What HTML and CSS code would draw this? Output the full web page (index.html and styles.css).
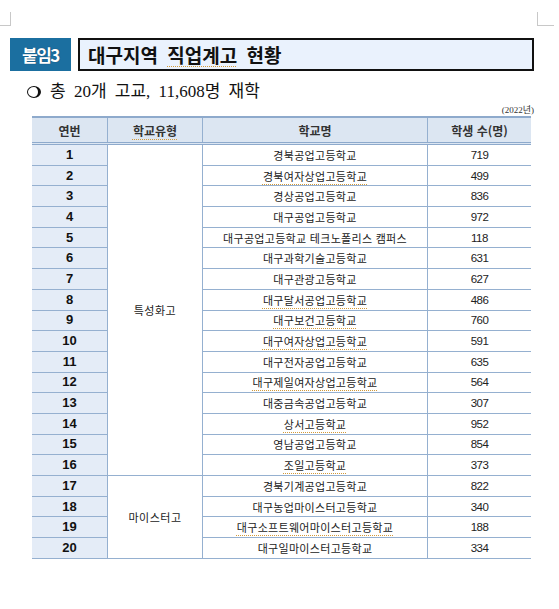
FILE: index.html
```html
<!DOCTYPE html>
<html lang="ko">
<head>
<meta charset="utf-8">
<link rel="stylesheet" href="styles.css">
</head>
<body>
<div class="page">
  <span class="corner corner-left"></span>
  <span class="corner corner-right"></span>
  <div class="title-row">
    <div class="badge">붙임3</div>
    <div class="title"><span class="title-text">대구지역 <span class="sp">직업계고</span> 현황</span></div>
  </div>
  <p class="bullet"><span class="circle"></span><span>총 20개 고교, 11,608명 재학</span></p>
  <div class="year">(2022년)</div>
  <table class="tbl">
    <thead>
      <tr><th class="c1">연번</th><th class="c2"><span class="sp">학교유형</span></th><th class="c3">학교명</th><th class="c4">학생 수(명)</th></tr>
    </thead>
    <tbody>
      <tr><td class="no">1</td><td class="type" rowspan="16">특성화고</td><td class="name">경북공업고등학교</td><td class="num">719</td></tr>
      <tr><td class="no">2</td><td class="name"><span class="sp">경북여자상업고등학교</span></td><td class="num">499</td></tr>
      <tr><td class="no">3</td><td class="name">경상공업고등학교</td><td class="num">836</td></tr>
      <tr><td class="no">4</td><td class="name">대구공업고등학교</td><td class="num">972</td></tr>
      <tr><td class="no">5</td><td class="name">대구공업고등학교 테크노폴리스 캠퍼스</td><td class="num">118</td></tr>
      <tr><td class="no">6</td><td class="name">대구과학기술고등학교</td><td class="num">631</td></tr>
      <tr><td class="no">7</td><td class="name">대구관광고등학교</td><td class="num">627</td></tr>
      <tr><td class="no">8</td><td class="name"><span class="sp">대구달서공업고등학교</span></td><td class="num">486</td></tr>
      <tr><td class="no">9</td><td class="name"><span class="sp">대구보건고등학교</span></td><td class="num">760</td></tr>
      <tr><td class="no">10</td><td class="name"><span class="sp">대구여자상업고등학교</span></td><td class="num">591</td></tr>
      <tr><td class="no">11</td><td class="name">대구전자공업고등학교</td><td class="num">635</td></tr>
      <tr><td class="no">12</td><td class="name"><span class="sp">대구제일여자상업고등학교</span></td><td class="num">564</td></tr>
      <tr><td class="no">13</td><td class="name">대중금속공업고등학교</td><td class="num">307</td></tr>
      <tr><td class="no">14</td><td class="name"><span class="sp">상서고등학교</span></td><td class="num">952</td></tr>
      <tr><td class="no">15</td><td class="name">영남공업고등학교</td><td class="num">854</td></tr>
      <tr><td class="no">16</td><td class="name"><span class="sp">조일고등학교</span></td><td class="num">373</td></tr>
      <tr><td class="no">17</td><td class="type" rowspan="4">마이스터고</td><td class="name">경북기계공업고등학교</td><td class="num">822</td></tr>
      <tr><td class="no">18</td><td class="name">대구농업마이스터고등학교</td><td class="num">340</td></tr>
      <tr><td class="no">19</td><td class="name"><span class="sp">대구소프트웨어마이스터고등학교</span></td><td class="num">188</td></tr>
      <tr><td class="no">20</td><td class="name">대구일마이스터고등학교</td><td class="num">334</td></tr>
    </tbody>
  </table>
</div>
</body>
</html>
```

FILE: styles.css
```css
html, body {
  margin: 0;
  padding: 0;
  background: #ffffff;
}

body {
  font-family: "Noto Sans CJK KR", "Noto Sans", sans-serif;
  color: #222;
}

.page {
  position: relative;
  width: 559px;
  height: 609px;
  padding: 38px 25px 0 10px;
  box-sizing: border-box;
}

.corner {
  position: absolute;
  top: 12px;
  width: 10px;
  height: 13px;
  border-bottom: 1px solid #c8c8c8;
}
.corner-left {
  left: 0;
  border-right: 1px solid #c8c8c8;
}
.corner-right {
  left: 537px;
  width: 16px;
  border-left: 1px solid #c8c8c8;
}

.title-row {
  display: flex;
  gap: 7px;
  height: 33px;
}

.badge {
  width: 61px;
  background: #1b6fa0;
  color: #fff;
  font-weight: 700;
  font-size: 17px;
  letter-spacing: -1.5px;
  display: flex;
  align-items: center;
  justify-content: center;
  text-shadow: 0 0 1px #0b3a5a;
}

.title {
  flex: 1;
  background: #eaf2fd;
  border: 2px solid #111;
  box-sizing: border-box;
  display: flex;
  align-items: center;
  padding-left: 8px;
  font-size: 19px;
  font-weight: 700;
  color: #111;
}

.title-text {
  word-spacing: 4px;
}

.sp {
  text-decoration: underline dotted #d39a3a;
  text-underline-offset: 3px;
  text-decoration-thickness: 1px;
}

.bullet {
  margin: 10px 0 0 17px;
  font-family: "Liberation Serif", "Noto Sans CJK KR", serif;
  font-size: 17px;
  line-height: 22px;
  color: #111;
  display: flex;
  align-items: center;
  word-spacing: 4px;
}

.circle {
  width: 10px;
  height: 10px;
  border: 1.5px solid #111;
  border-right-width: 3px;
  border-radius: 50%;
  margin-right: 9px;
}

.year {
  text-align: right;
  font-family: "Liberation Serif", "Noto Sans CJK KR", serif;
  font-size: 9px;
  line-height: 12px;
  margin-top: 1px;
  color: #333;
}

.tbl {
  margin-left: 22px;
  width: 496px;
  border-collapse: collapse;
  table-layout: fixed;
  font-size: 11px;
  color: #222;
}

.tbl th {
  height: 24px;
  background: #dce6f2;
  font-size: 12px;
  font-weight: 700;
  color: #333;
  border-top: 2px solid #8eaacc;
  border-bottom: 3px double #8eaacc;
  padding: 0;
}

.tbl td {
  height: 19.7px;
  padding: 0;
  border-bottom: 1px solid #95b0d0;
  text-align: center;
  line-height: 14px;
}

.tbl th + th,
.tbl td + td {
  border-left: 1px solid #95b0d0;
}

.c1 { width: 75px; }
.c2 { width: 94px; }
.c3 { width: 224px; }
.c4 { width: 103px; }

.no {
  background: #e4ecf7;
  font-family: "Liberation Sans", Arial, sans-serif;
  font-weight: 700;
  font-size: 13px;
  color: #111;
}

.type {
  font-size: 11px;
  vertical-align: middle;
  letter-spacing: 0.5px;
}

.name {
  letter-spacing: 0.3px;
}

.num {
  font-family: "Liberation Sans", Arial, sans-serif;
  font-size: 11.5px;
  letter-spacing: -0.5px;
}
```
